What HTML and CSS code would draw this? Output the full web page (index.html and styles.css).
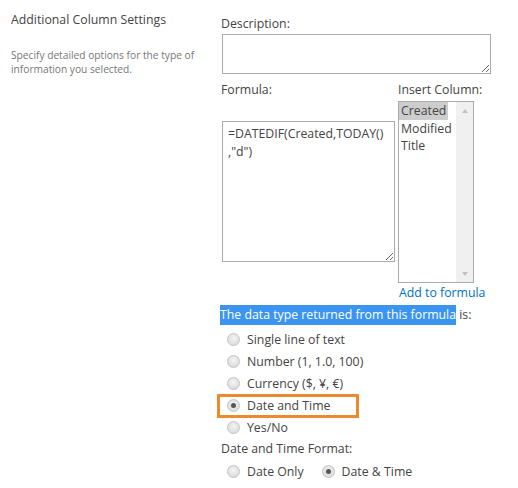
FILE: index.html
```html
<!DOCTYPE html>
<html>
<head>
    <title>Column Settings</title>
    <link rel="stylesheet" href="styles.css">
</head>
<body>
    <div class="page">
        <div class="section-info">
            <h3>Additional Column Settings</h3>
            <p>Specify detailed options for the type of information you selected.</p>
        </div>

        <div class="section-body">
            <div class="field-label">Description:</div>
            <textarea class="desc-box"></textarea>

            <div class="formula-row">
                <div class="formula-col">
                    <div class="field-label">Formula:</div>
                    <textarea class="formula-box">=DATEDIF(Created,TODAY(),"d")</textarea>
                </div>
                <div class="column-col">
                    <div class="field-label">Insert Column:</div>
                    <div class="listbox">
                        <div class="list-items">
                            <div class="list-item selected">Created</div>
                            <div class="list-item">Modified</div>
                            <div class="list-item">Title</div>
                        </div>
                        <div class="scrollbar">
                            <span class="arrow-up"></span>
                            <span class="arrow-down"></span>
                        </div>
                    </div>
                    <a href="#" class="add-link">Add to formula</a>
                </div>
            </div>

            <div class="return-type"><span class="hl">The data type returned from this formula</span> is:</div>

            <div class="radio-list">
                <label class="radio-row"><input type="radio" name="rtype">Single line of text</label>
                <label class="radio-row"><input type="radio" name="rtype">Number (1, 1.0, 100)</label>
                <label class="radio-row"><input type="radio" name="rtype">Currency ($, ¥, €)</label>
                <label class="radio-row marked"><input type="radio" name="rtype" checked>Date and Time</label>
                <label class="radio-row"><input type="radio" name="rtype">Yes/No</label>
            </div>

            <div class="field-label format-label">Date and Time Format:</div>
            <div class="radio-inline">
                <label class="radio-row"><input type="radio" name="dfmt">Date Only</label>
                <label class="radio-row"><input type="radio" name="dfmt" checked>Date &amp; Time</label>
            </div>
        </div>
    </div>
</body>
</html>
```

FILE: styles.css
```css
body {
    margin: 0;
    font-family: "Open Sans", "Noto Sans", sans-serif;
    font-size: 12.3px;
    color: #444;
    background: #fff;
}
.page {
    display: flex;
}
.section-info {
    width: 199px;
    padding: 11px 0 0 11px;
}
.section-info h3 {
    margin: 0;
    font-size: 12.3px;
    font-weight: normal;
    line-height: 18px;
    color: #444;
}
.section-info p {
    margin: 20px 0 0;
    font-size: 10.2px;
    line-height: 13.5px;
    color: #777;
    width: 195px;
}
.section-body {
    padding: 15px 0 0 11px;
    width: 280px;
}
.field-label {
    line-height: 18px;
}
textarea {
    display: block;
    box-sizing: border-box;
    border: 1px solid #ababab;
    font-family: inherit;
    font-size: 12.3px;
    color: #444;
    margin: 0;
}
.desc-box {
    width: 269px;
    height: 40px;
    margin: 1px 0 0 1px;
}
.formula-col {
    width: 177px;
}
.formula-row {
    display: flex;
    margin-top: 7px;
}
.formula-box {
    width: 173px;
    height: 141px;
    margin: 22px 0 0 1px;
    padding: 3px 8px 3px 5px;
    line-height: 18px;
    line-break: anywhere;
    resize: both;
}
.column-col {
    display: flex;
    flex-direction: column;
}
.listbox {
    display: flex;
    width: 76px;
    height: 182px;
    box-sizing: border-box;
    border: 1px solid #ababab;
    margin-top: 2px;
}
.list-items {
    flex: 1;
}
.list-item {
    line-height: 17.5px;
    padding-left: 2px;
    white-space: nowrap;
}
.list-item.selected {
    background: #cdcdcd;
    margin-right: 8px;
}
.scrollbar {
    width: 17px;
    background: #f0f0f0;
    display: flex;
    flex-direction: column;
    justify-content: space-between;
    align-items: center;
    padding: 7px 0 6px;
}
.arrow-up, .arrow-down {
    width: 0;
    height: 0;
    border-left: 3.5px solid transparent;
    border-right: 3.5px solid transparent;
}
.arrow-up {
    border-bottom: 4px solid #c2c2c2;
}
.arrow-down {
    border-top: 4px solid #c2c2c2;
}
.add-link {
    color: #0072c6;
    text-decoration: none;
    line-height: 18px;
    margin: 1px 0 0 1px;
}
.return-type {
    margin: 3px 0 0 -1px;
    line-height: 20px;
}
.hl {
    background: #3b95f0;
    color: #fff;
    display: inline-block;
}
.radio-list {
    margin-top: 3px;
}
.radio-row {
    display: flex;
    align-items: center;
    height: 22px;
    padding-left: 5px;
    white-space: nowrap;
}
.radio-row.marked {
    position: relative;
}
.radio-row.marked::after {
    content: '';
    position: absolute;
    top: 0;
    left: -4px;
    width: 136px;
    height: 18px;
    border: 3px solid #eb8a2f;
}
input[type="radio"] {
    appearance: none;
    -webkit-appearance: none;
    width: 13px;
    height: 13px;
    margin: 0 7px 0 1px;
    border-radius: 50%;
    border: 1px solid #c4c4c4;
    background: radial-gradient(circle at 50% 40%, #f4f4f4 0%, #dedede 70%, #d0d0d0 100%);
    box-sizing: border-box;
    display: grid;
    place-items: center;
}
input[type="radio"]:checked::before {
    content: '';
    width: 5px;
    height: 5px;
    border-radius: 50%;
    background: #555;
}
.format-label {
    line-height: 22px;
}
.radio-inline {
    display: flex;
    gap: 12px;
}
```
